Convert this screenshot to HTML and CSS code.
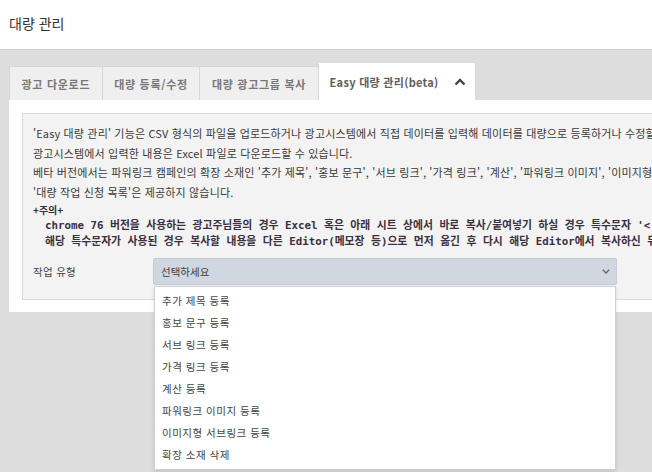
FILE: index.html
```html
<!DOCTYPE html>
<html lang="ko">
    <head>
        <meta charset="utf-8">
        <title>대량 관리</title>
        <link rel="stylesheet" href="styles.css">
    </head>

    <body>
        <header class="pageHeader">
            <h1>대량 관리</h1>
        </header>

        <main class="content">
            <ul class="tabs">
                <li class="tab">광고 다운로드</li>
                <li class="tab">대량 등록/수정</li>
                <li class="tab">대량 광고그룹 복사</li>
                <li class="tab active">
                    Easy 대량 관리(beta)
                    <svg class="caret" width="12" height="8" viewBox="0 0 12 8">
                        <polyline points="1.5,6.5 6,2 10.5,6.5" fill="none" stroke="#444" stroke-width="2.4"/>
                    </svg>
                </li>
            </ul>

            <section class="panel">
                <div class="notice">
                    <p class="line">'Easy 대량 관리' 기능은 CSV 형식의 파일을 업로드하거나 광고시스템에서 직접 데이터를 입력해 데이터를 대량으로 등록하거나 수정할 수 있습니다.</p>
                    <p class="line">광고시스템에서 입력한 내용은 Excel 파일로 다운로드할 수 있습니다.</p>
                    <p class="line">베타 버전에서는 파워링크 캠페인의 확장 소재인 '추가 제목', '홍보 문구', '서브 링크', '가격 링크', '계산', '파워링크 이미지', '이미지형 서브링크'만 지원하며,</p>
                    <p class="line">'대량 작업 신청 목록'은 제공하지 않습니다.</p>

                    <p class="warnTitle">+주의+</p>
                    <p class="warn">chrome 76 버전을 사용하는 광고주님들의 경우 Excel 혹은 아래 시트 상에서 바로 복사/붙여넣기 하실 경우 특수문자 '&lt;', '&gt;'가 포함되어</p>
                    <p class="warn">해당 특수문자가 사용된 경우 복사할 내용을 다른 Editor(메모장 등)으로 먼저 옮긴 후 다시 해당 Editor에서 복사하신 뒤 사용해 주세요.</p>

                    <div class="field">
                        <span class="fieldLabel">작업 유형</span>
                        <div class="selectWrap">
                            <div class="select">
                                <span>선택하세요</span>
                                <svg width="8" height="5" viewBox="0 0 8 5">
                                    <polyline points="0.8,0.8 4,4 7.2,0.8" fill="none" stroke="#666" stroke-width="1.3"/>
                                </svg>
                            </div>
                            <ul class="options">
                                <li>추가 제목 등록</li>
                                <li>홍보 문구 등록</li>
                                <li>서브 링크 등록</li>
                                <li>가격 링크 등록</li>
                                <li>계산 등록</li>
                                <li>파워링크 이미지 등록</li>
                                <li>이미지형 서브링크 등록</li>
                                <li>확장 소재 삭제</li>
                            </ul>
                        </div>
                    </div>
                </div>
            </section>
        </main>
    </body>
</html>
```

FILE: styles.css
```css
body {
    margin: 0;
    overflow: hidden;
    width: 652px;
    height: 472px;

    font-family: "Noto Sans CJK KR", "Noto Sans", sans-serif;
    color: #333333;
    background-color: #dddddd;
}

p, ul, h1 {
    margin: 0;
    padding: 0;
}

ul {
    list-style: none;
}

.pageHeader {
    height: 49px;
    padding-left: 9px;
    display: flex;
    align-items: center;

    background-color: #ffffff;
    border-bottom: 1px solid #cfcfcf;
}

.pageHeader h1 {
    margin-top: -3px;
    font-size: 14px;
    font-weight: normal;
    color: #333333;
}

.content {
    padding: 13px 0 0 9px;
}

.tabs {
    display: flex;
    align-items: flex-end;
}

.tab {
    height: 33px;
    padding: 0 11.5px 0 11.5px;
    display: flex;
    align-items: center;

    font-size: 11px;
    font-weight: bold;
    letter-spacing: 0.7px;
    color: #777777;
    white-space: nowrap;

    background-color: #efefef;
    border: 1px solid #d7d7d7;
    border-left: none;
    border-bottom: none;
}

.tab:first-child {
    border-left: 1px solid #d7d7d7;
}

.tab.active {
    height: 37px;
    padding: 0 9px 0 11px;
    letter-spacing: 0.3px;
    background-color: #ffffff;
    border: none;
    color: #5e5e5e;
}

.caret {
    margin-left: 15px;
}

.panel {
    width: 700px;
    padding: 13px 0 12px 13px;
    background-color: #ffffff;
}

.notice {
    padding: 10px 0 14px 10px;
    background-color: #f3f3f3;
    border: 1px solid #dcdcdc;
    border-right: none;
}

.line {
    font-size: 11px;
    letter-spacing: 0.15px;
    line-height: 19.5px;
    white-space: nowrap;
    color: #3a3a3a;
}

.warnTitle {
    margin-top: -1px;
    font-size: 10px;
    font-weight: bold;
    line-height: 17px;
    color: #3a3040;
}

.warn {
    padding-left: 12px;
    font-family: "DejaVu Sans Mono", "Noto Sans CJK KR", monospace;
    font-size: 10.8px;
    font-weight: bold;
    line-height: 16px;
    white-space: nowrap;
    color: #3a3040;
}

.field {
    margin-top: 8px;
    display: flex;
    align-items: center;
}

.fieldLabel {
    width: 120px;
    font-size: 10.5px;
    letter-spacing: 0.3px;
    color: #444444;
}

.selectWrap {
    position: relative;
    width: 464px;
}

.select {
    height: 25px;
    padding: 0 6px 0 7px;
    display: flex;
    align-items: center;
    justify-content: space-between;

    font-size: 10.5px;
    color: #3d3d3d;

    background-color: #d0d7e1;
    border: 1px solid #c5ccd7;
    border-radius: 2px;
}

.options {
    position: absolute;
    top: 28px;
    left: 1px;
    right: 1px;
    padding: 2px 0 4px 0;

    background-color: #ffffff;
    border: 1px solid #d2d2d2;
    box-shadow: 0 2px 4px rgba(0, 0, 0, 0.12);
}

.options li {
    height: 22px;
    padding-left: 7px;
    display: flex;
    align-items: center;

    font-size: 10.5px;
    letter-spacing: 0.5px;
    color: #444444;
}
```
